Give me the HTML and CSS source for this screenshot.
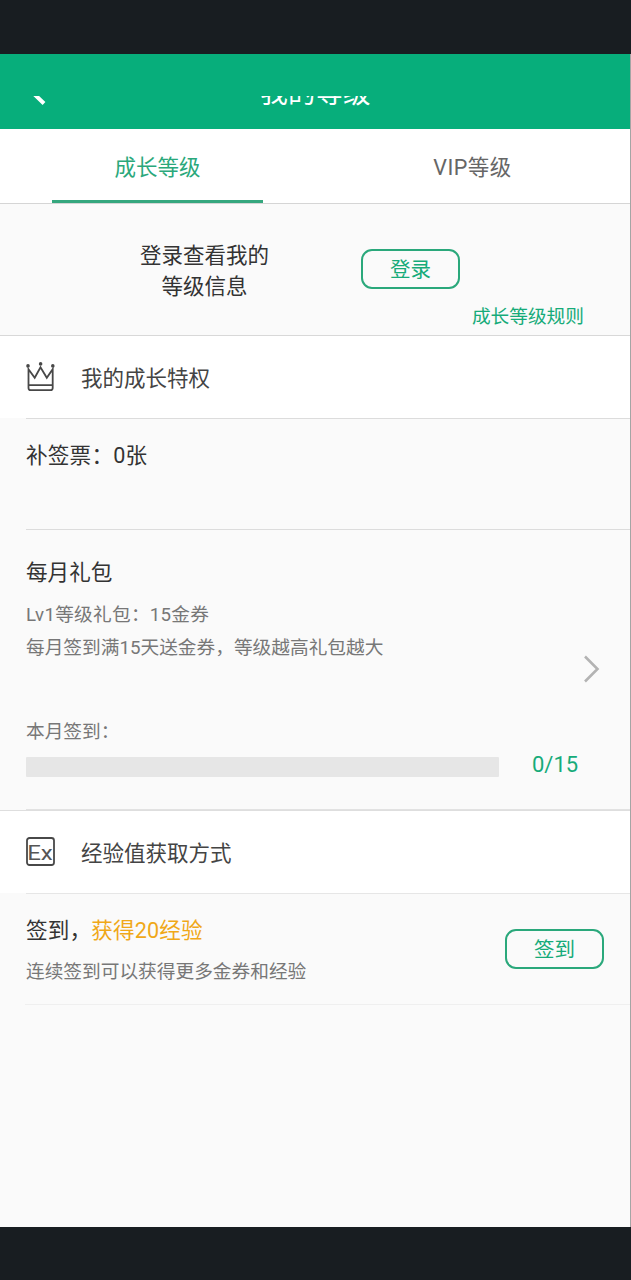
FILE: index.html
```html
<!DOCTYPE html>
<html lang="zh-CN">
<head>
    <meta charset="UTF-8">
    <meta name="viewport" content="width=device-width, initial-scale=1.0">
    <title>我的等级</title>
    <link rel="stylesheet" href="styles.css">
</head>
<body>
    <div class="screen">
        <header class="header">
            <div class="header-inner">
                <svg class="back" width="16" height="28" viewBox="0 0 16 28" fill="none" stroke="#fff" stroke-width="4">
                    <path d="M14 1 L1 13 L14 25.5"/>
                </svg>
                <h1>我的等级</h1>
            </div>
        </header>

        <nav class="tabs">
            <a class="tab active"><span>成长等级</span></a>
            <a class="tab vip"><span>VIP等级</span></a>
        </nav>

        <section class="login">
            <p class="login-text">登录查看我的<br>等级信息</p>
            <button class="btn" type="button">登录</button>
            <a class="rules">成长等级规则</a>
        </section>

        <h2 class="section-title">
            <svg width="30" height="30" viewBox="0 0 30 30" fill="none" stroke="#484848" stroke-width="1.8">
                <path d="M2.5 7.2 V26 Q2.5 28.2 4.7 28.2 H24.5 Q26.7 28.2 26.7 26 V7.2 L20.8 15.8 L14.5 5.2 L8.7 15.8 Z M2.5 23.2 H26.7"/>
                <g fill="#484848" stroke="none">
                    <circle cx="2" cy="3.9" r="1.8"/>
                    <circle cx="14.6" cy="1.9" r="1.8"/>
                    <circle cx="26.8" cy="3.9" r="1.8"/>
                </g>
            </svg>
            <span>我的成长特权</span>
        </h2>

        <section class="row ticket">
            <h3>补签票：0张</h3>
        </section>

        <section class="row gift">
            <h3>每月礼包</h3>
            <p class="level">Lv1等级礼包：15金券</p>
            <p>每月签到满15天送金券，等级越高礼包越大</p>
            <svg class="arrow" width="18" height="28" viewBox="0 0 18 28" fill="none" stroke="#b3b3b3" stroke-width="2.6">
                <path d="M2 1.5 L14.5 14 L2 26.5"/>
            </svg>
            <p class="month">本月签到：</p>
            <div class="progress">
                <div class="bar"></div>
                <span class="count">0/15</span>
            </div>
        </section>

        <h2 class="section-title exp">
            <svg width="30" height="30" viewBox="0 0 30 30" fill="none" stroke="#484848" stroke-width="1.8">
                <rect x="1" y="1" width="27" height="27" rx="2.5"/>
                <text class="ex" x="1.2" y="22.6" textLength="25.6" lengthAdjust="spacingAndGlyphs">Ex</text>
            </svg>
            <span>经验值获取方式</span>
        </h2>

        <section class="row sign">
            <div>
                <h3>签到，<em>获得20经验</em></h3>
                <p>连续签到可以获得更多金券和经验</p>
            </div>
            <button class="btn" type="button">签到</button>
        </section>
    </div>
</body>
</html>
```
FILE: styles.css
```css
* {
    box-sizing: border-box;
}

body {
    margin: 0;
    padding: 54px 0 53px;
    background: #181d21;
    color: #333;
    font-family: Roboto, "Noto Sans CJK SC", sans-serif;
}

h1, h2, h3, p {
    margin: 0;
    font-weight: 400;
}

.screen {
    height: 1173px;
    background: #fafafa;
    border-right: 1px solid #a5a5a5;
}

.header {
    height: 75px;
    padding-top: 42px;
    background: #07ae7b;
}

/* the bar is scrolled, only the lower part of its content is visible */
.header-inner {
    display: flex;
    align-items: flex-end;
    height: 16px;
    overflow: hidden;
    color: #fff;
}

.back {
    flex: none;
    width: 16px;
    margin: 0 0 6px 30px;
}

h1 {
    flex: 1;
    padding-right: 45px;
    font-size: 27.6px;
    line-height: 37px;
    text-align: center;
}

.tabs {
    display: flex;
    height: 75px;
    background: #fff;
    border-bottom: 1px solid #d5d5d5;
}

.tab {
    flex: 1;
    display: flex;
    justify-content: center;
    color: #666;
    font-size: 21.5px;
    line-height: 78px;
}

.tab span {
    width: 211px;
    height: 74px;
    text-align: center;
}

.tab.active {
    color: #2aa87b;
}

.tab.active span {
    border-bottom: 3px solid #35a77e;
}

.tab.vip {
    letter-spacing: 0.5px;
}

.login {
    display: grid;
    grid-template-columns: 361px 99px 1fr;
    grid-template-rows: 94px 37px;
    height: 132px;
    border-bottom: 1px solid #d8d8d8;
}

.login-text {
    padding: 36px 0 0 48px;
    font-size: 21.5px;
    line-height: 31px;
    text-align: center;
}

.btn {
    width: 99px;
    height: 40px;
    padding: 3px 0 0;
    border: 2px solid #2aa87b;
    border-radius: 11px;
    background: transparent;
    color: #16ab79;
    font-family: inherit;
    font-size: 20.5px;
    line-height: 33px;
}

.login .btn {
    margin-top: 45px;
}

.rules {
    grid-column: 1 / -1;
    padding-right: 46px;
    color: #16ab79;
    font-size: 18.7px;
    line-height: 38px;
    text-align: right;
}

.section-title {
    display: flex;
    align-items: center;
    height: 82px;
    padding-left: 26px;
    background: #fff;
    color: #444;
    font-size: 21.5px;
    line-height: 30px;
}

.section-title svg {
    margin-right: 25px;
}

.section-title span {
    padding-top: 3px;
}

.section-title.exp {
    height: 83px;
    border-top: 1px solid #dedede;
}

.ex {
    fill: #555;
    stroke: none;
    font-size: 20px;
}

.row {
    position: relative;
    padding-left: 26px;
}

/* divider starts at the text column */
.row::before {
    content: '';
    display: block;
    height: 1px;
    background: #dcdcdc;
}

.row h3 {
    font-size: 21.6px;
    line-height: 32px;
}

.row p {
    color: #777;
    font-size: 18.7px;
    line-height: 34px;
}

.ticket {
    height: 111px;
}

.ticket h3 {
    padding-top: 21px;
    letter-spacing: 0.2px;
}

.gift {
    height: 281px;
}

.gift::after {
    content: '';
    position: absolute;
    left: 26px;
    right: 0;
    bottom: 0;
    height: 1px;
    background: #e2e2e2;
}

.gift h3 {
    padding: 27px 0 9px;
}

.gift .level {
    height: 33px;
    letter-spacing: 0.25px;
}

.arrow {
    position: absolute;
    top: 126px;
    right: 29px;
}

.gift .month {
    margin-top: 50px;
}

.progress {
    display: flex;
    align-items: center;
    margin-top: 4px;
}

.bar {
    width: 473px;
    height: 20px;
    margin-top: 4px;
    border-radius: 1px;
    background: #e6e6e6;
}

.count {
    margin-left: 33px;
    color: #16ab79;
    font-size: 22px;
    line-height: 24px;
}

.sign {
    display: flex;
    justify-content: space-between;
    height: 112px;
    padding-right: 26px;
    border-bottom: 1px solid transparent;
    border-image: linear-gradient(to right, transparent 26px, #efefef 26px) 1;
}

.sign::before {
    position: absolute;
    left: 26px;
    right: 0;
    background: #e6e6e6;
}

.sign h3 {
    padding-top: 22px;
    letter-spacing: 0.15px;
}

.sign em {
    color: #f0a818;
    font-style: normal;
}

.sign p {
    margin-top: 8px;
}

.sign .btn {
    margin-top: 36px;
}
```
